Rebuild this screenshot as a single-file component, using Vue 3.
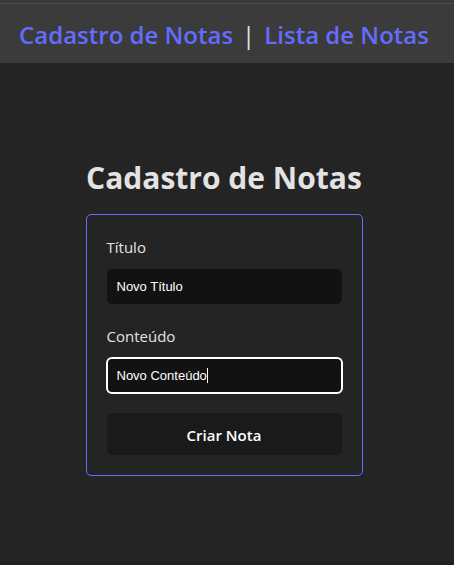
<script setup>
import { nextTick, onMounted, ref } from 'vue'

const title = ref('Novo Título')
const content = ref('Novo Conteúdo')
const contentInput = ref(null)
const caretLeft = ref(0)
const caretVisible = ref(false)

// Keeps the drawn caret at the selection end of the focused field.
async function placeCaret() {
  await nextTick()
  const field = contentInput.value
  const style = getComputedStyle(field)
  const pen = document.createElement('canvas').getContext('2d')
  pen.font = `${style.fontWeight} ${style.fontSize} ${style.fontFamily}`
  const before = field.value.slice(0, field.selectionEnd)
  caretLeft.value = Math.round(parseInt(style.paddingLeft) + pen.measureText(before).width) - field.scrollLeft
  caretVisible.value = true
}

onMounted(() => {
  const field = contentInput.value
  field.focus()
  field.setSelectionRange(content.value.length, content.value.length)
  placeCaret()
})
</script>

<template>
  <div class="page">
    <nav class="topbar">
      <a href="#cadastro">Cadastro de Notas</a>
      <span class="separator">|</span>
      <a href="#lista">Lista de Notas</a>
    </nav>
    <main class="content">
      <section class="notes">
        <h1>Cadastro de Notas</h1>
        <form class="card" @submit.prevent>
          <div class="field">
            <label for="titulo">Título</label>
            <input id="titulo" v-model="title" type="text" autocomplete="off" />
          </div>
          <div class="field">
            <label for="conteudo">Conteúdo</label>
            <div class="entry">
              <input
                id="conteudo"
                ref="contentInput"
                v-model="content"
                class="with-caret"
                type="text"
                autocomplete="off"
                @input="placeCaret"
                @keyup="placeCaret"
                @click="placeCaret"
                @focus="placeCaret"
                @blur="caretVisible = false"
              />
              <span v-if="caretVisible" class="caret" :style="{ left: caretLeft + 'px' }"></span>
            </div>
          </div>
          <button type="submit">Criar Nota</button>
        </form>
      </section>
    </main>
  </div>
</template>

<style>
body {
  background: #242424;
}
</style>

<style scoped>
.page {
  display: flex;
  flex-direction: column;
  min-height: 100vh;
  box-sizing: border-box;
  border-top: 3px solid #393939;
  border-bottom: 4px solid #211f21;
  background: #242424;
  color: #e3e3e3;
  font-family: "Segoe UI", "Open Sans", "Noto Sans", sans-serif;
  font-size: 15px;
  line-height: 24px;
}

.topbar {
  display: flex;
  justify-content: center;
  align-items: center;
  gap: 9px;
  height: 60px;
  box-sizing: border-box;
  padding: 2px 6px 0 0;
  border-top: 1px solid #484848;
  background: #3b3b3b;
  font-size: 24px;
  line-height: 36px;
  white-space: nowrap;
}

.topbar a {
  color: #646cff;
  font-weight: 600;
  text-decoration: none;
}

.content {
  display: flex;
  flex: 1;
  justify-content: center;
  align-items: center;
  padding: 30px 26px 20px 20px;
}

.notes {
  display: flex;
  flex-direction: column;
  gap: 16px;
  width: 277px;
  max-width: 100%;
}

h1 {
  margin: 0;
  font-size: 30px;
  font-weight: 700;
  line-height: 40px;
  text-align: center;
  white-space: nowrap;
}

.card {
  display: flex;
  flex-direction: column;
  gap: 20px;
  padding: 20px;
  border: 1px solid #646cff;
  border-radius: 5px;
}

.field {
  display: flex;
  flex-direction: column;
  gap: 10px;
}

.entry {
  display: flex;
  position: relative;
}

input {
  box-sizing: border-box;
  width: 100%;
  height: 35px;
  padding: 0 10px;
  border: 0;
  border-radius: 5px;
  background: #121212;
  color: #fff;
  font-family: "Liberation Sans", Arial, sans-serif;
  font-size: 13px;
  font-weight: 500;
}

input:focus {
  outline: 2px solid #fff;
  outline-offset: -1px;
}

.with-caret {
  caret-color: transparent;
}

.caret {
  position: absolute;
  top: 10px;
  width: 1px;
  height: 15px;
  background: #fff;
  pointer-events: none;
}

button {
  padding: 10px 20px 8px;
  border: 0;
  border-radius: 5px;
  background: #1a1a1a;
  color: #fff;
  font-family: inherit;
  font-size: 15px;
  font-weight: 600;
  line-height: 24px;
  cursor: pointer;
}
</style>
